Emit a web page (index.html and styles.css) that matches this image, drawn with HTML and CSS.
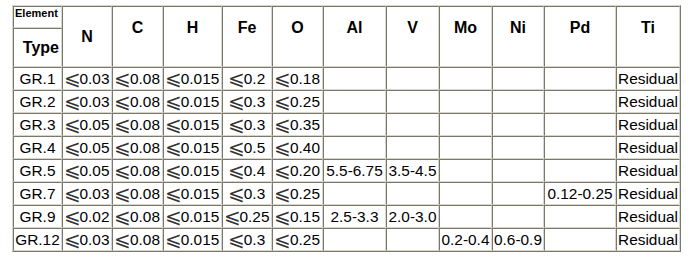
FILE: index.html
```html
<!DOCTYPE html>
<html>
<head>
<meta charset="utf-8">
<title>Titanium grades</title>
<link rel="stylesheet" href="styles.css">
</head>
<body>
<div class="wrap">
<table class="spec">
<colgroup>
<col class="w-type"><col class="w-n"><col class="w-c"><col class="w-h"><col class="w-fe"><col class="w-o"><col class="w-al"><col class="w-v"><col class="w-mo"><col class="w-ni"><col class="w-pd"><col class="w-ti">
</colgroup>
<thead>
<tr class="h1">
<th class="el">Element</th>
<th rowspan="2" class="mid">N</th>
<th rowspan="2" class="hd">C</th>
<th rowspan="2" class="hd">H</th>
<th rowspan="2" class="hd">Fe</th>
<th rowspan="2" class="hd">O</th>
<th rowspan="2" class="hd">Al</th>
<th rowspan="2" class="hd">V</th>
<th rowspan="2" class="hd">Mo</th>
<th rowspan="2" class="hd">Ni</th>
<th rowspan="2" class="hd">Pd</th>
<th rowspan="2" class="hd">Ti</th>
</tr>
<tr class="h2"><th class="type">Type</th></tr>
</thead>
<tbody>
<tr><td>GR.1</td><td><span class="le">⩽</span>0.03</td><td><span class="le">⩽</span>0.08</td><td><span class="le">⩽</span>0.015</td><td><span class="le">⩽</span>0.2</td><td><span class="le">⩽</span>0.18</td><td></td><td></td><td></td><td></td><td></td><td>Residual</td></tr>
<tr><td>GR.2</td><td><span class="le">⩽</span>0.03</td><td><span class="le">⩽</span>0.08</td><td><span class="le">⩽</span>0.015</td><td><span class="le">⩽</span>0.3</td><td><span class="le">⩽</span>0.25</td><td></td><td></td><td></td><td></td><td></td><td>Residual</td></tr>
<tr><td>GR.3</td><td><span class="le">⩽</span>0.05</td><td><span class="le">⩽</span>0.08</td><td><span class="le">⩽</span>0.015</td><td><span class="le">⩽</span>0.3</td><td><span class="le">⩽</span>0.35</td><td></td><td></td><td></td><td></td><td></td><td>Residual</td></tr>
<tr><td>GR.4</td><td><span class="le">⩽</span>0.05</td><td><span class="le">⩽</span>0.08</td><td><span class="le">⩽</span>0.015</td><td><span class="le">⩽</span>0.5</td><td><span class="le">⩽</span>0.40</td><td></td><td></td><td></td><td></td><td></td><td>Residual</td></tr>
<tr><td>GR.5</td><td><span class="le">⩽</span>0.05</td><td><span class="le">⩽</span>0.08</td><td><span class="le">⩽</span>0.015</td><td><span class="le">⩽</span>0.4</td><td><span class="le">⩽</span>0.20</td><td>5.5-6.75</td><td>3.5-4.5</td><td></td><td></td><td></td><td>Residual</td></tr>
<tr><td>GR.7</td><td><span class="le">⩽</span>0.03</td><td><span class="le">⩽</span>0.08</td><td><span class="le">⩽</span>0.015</td><td><span class="le">⩽</span>0.3</td><td><span class="le">⩽</span>0.25</td><td></td><td></td><td></td><td></td><td>0.12-0.25</td><td>Residual</td></tr>
<tr><td>GR.9</td><td><span class="le">⩽</span>0.02</td><td><span class="le">⩽</span>0.08</td><td><span class="le">⩽</span>0.015</td><td><span class="le">⩽</span>0.25</td><td><span class="le">⩽</span>0.15</td><td>2.5-3.3</td><td>2.0-3.0</td><td></td><td></td><td></td><td>Residual</td></tr>
<tr><td>GR.12</td><td><span class="le">⩽</span>0.03</td><td><span class="le">⩽</span>0.08</td><td><span class="le">⩽</span>0.015</td><td><span class="le">⩽</span>0.3</td><td><span class="le">⩽</span>0.25</td><td></td><td></td><td>0.2-0.4</td><td>0.6-0.9</td><td></td><td>Residual</td></tr>
</tbody>
</table>
</div>
</body>
</html>
```
FILE: styles.css
```css
html, body {
  margin: 0;
  padding: 0;
  background: #fff;
}
body {
  font-family: "Liberation Sans", Arial, sans-serif;
  color: #000;
}
.wrap {
  padding: 5px 0 0 12px;
}
.spec {
  table-layout: fixed;
  width: 669px;
  border-collapse: separate;
  border-spacing: 0;
  border: 1px solid;
  border-color: #d8d5cc #7a776b #7a776b #d8d5cc;
}
.spec th,
.spec td {
  box-sizing: border-box;
  border: 1px solid;
  border-color: #7a776b #d8d5cc #d8d5cc #7a776b;
  padding: 0 1px;
  text-align: center;
  vertical-align: middle;
  white-space: nowrap;
  overflow: visible;
}
.spec td {
  font-size: 15.4px;
  line-height: 17px;
}
.spec th {
  font-size: 16px;
  font-weight: bold;
  line-height: 18px;
}
.w-type { width: 49px; }
.w-n { width: 50px; }
.w-c { width: 51px; }
.w-h { width: 59px; }
.w-fe { width: 50px; }
.w-o { width: 51px; }
.w-al { width: 63px; }
.w-v { width: 53px; }
.w-mo { width: 53px; }
.w-ni { width: 52px; }
.w-pd { width: 72px; }
.w-ti { width: 64px; }
.h1 { height: 22px; }
.h2 { height: 39px; }
.spec tbody tr { height: 23px; }
.spec th.el {
  font-size: 11px;
  line-height: 13px;
  text-align: left;
  vertical-align: top;
}
.spec th.type {
  text-align: right;
  padding-right: 2px;
}
.spec th.hd {
  padding-bottom: 18px;
}
.le {
  display: inline-block;
  width: 16px;
  font-family: "DejaVu Sans ExtraLight", "DejaVu Sans", sans-serif;
  font-weight: 200;
  font-size: 20px;
  line-height: 17px;
  vertical-align: top;
  text-align: left;
  margin-left: -1px;
  color: #333;
}
```
